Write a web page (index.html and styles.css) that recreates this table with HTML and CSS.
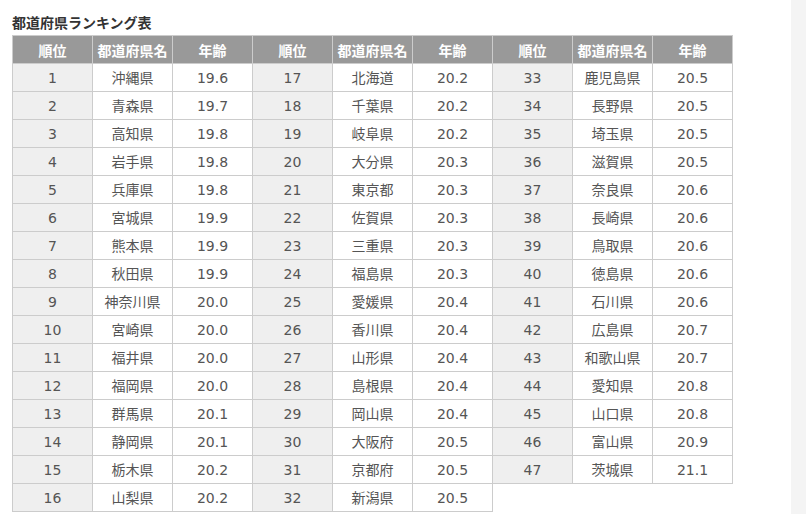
FILE: index.html
```html
<!DOCTYPE html>
<html lang="ja">
<head>
<meta charset="utf-8">
<title>都道府県ランキング表</title>
<link rel="stylesheet" href="styles.css">
</head>
<body>
<div class="page">
  <main class="main">
    <h2 class="title">都道府県ランキング表</h2>
    <div class="tables">
      <table class="rank">
        <colgroup><col class="c"><col class="c"><col class="c"></colgroup>
        <thead><tr><th>順位</th><th>都道府県名</th><th>年齢</th></tr></thead>
        <tbody>
          <tr><td class="no">1</td><td>沖縄県</td><td>19.6</td></tr>
          <tr><td class="no">2</td><td>青森県</td><td>19.7</td></tr>
          <tr><td class="no">3</td><td>高知県</td><td>19.8</td></tr>
          <tr><td class="no">4</td><td>岩手県</td><td>19.8</td></tr>
          <tr><td class="no">5</td><td>兵庫県</td><td>19.8</td></tr>
          <tr><td class="no">6</td><td>宮城県</td><td>19.9</td></tr>
          <tr><td class="no">7</td><td>熊本県</td><td>19.9</td></tr>
          <tr><td class="no">8</td><td>秋田県</td><td>19.9</td></tr>
          <tr><td class="no">9</td><td>神奈川県</td><td>20.0</td></tr>
          <tr><td class="no">10</td><td>宮崎県</td><td>20.0</td></tr>
          <tr><td class="no">11</td><td>福井県</td><td>20.0</td></tr>
          <tr><td class="no">12</td><td>福岡県</td><td>20.0</td></tr>
          <tr><td class="no">13</td><td>群馬県</td><td>20.1</td></tr>
          <tr><td class="no">14</td><td>静岡県</td><td>20.1</td></tr>
          <tr><td class="no">15</td><td>栃木県</td><td>20.2</td></tr>
          <tr><td class="no">16</td><td>山梨県</td><td>20.2</td></tr>
        </tbody>
      </table>
      <table class="rank">
        <colgroup><col class="c"><col class="c"><col class="c"></colgroup>
        <thead><tr><th>順位</th><th>都道府県名</th><th>年齢</th></tr></thead>
        <tbody>
          <tr><td class="no">17</td><td>北海道</td><td>20.2</td></tr>
          <tr><td class="no">18</td><td>千葉県</td><td>20.2</td></tr>
          <tr><td class="no">19</td><td>岐阜県</td><td>20.2</td></tr>
          <tr><td class="no">20</td><td>大分県</td><td>20.3</td></tr>
          <tr><td class="no">21</td><td>東京都</td><td>20.3</td></tr>
          <tr><td class="no">22</td><td>佐賀県</td><td>20.3</td></tr>
          <tr><td class="no">23</td><td>三重県</td><td>20.3</td></tr>
          <tr><td class="no">24</td><td>福島県</td><td>20.3</td></tr>
          <tr><td class="no">25</td><td>愛媛県</td><td>20.4</td></tr>
          <tr><td class="no">26</td><td>香川県</td><td>20.4</td></tr>
          <tr><td class="no">27</td><td>山形県</td><td>20.4</td></tr>
          <tr><td class="no">28</td><td>島根県</td><td>20.4</td></tr>
          <tr><td class="no">29</td><td>岡山県</td><td>20.4</td></tr>
          <tr><td class="no">30</td><td>大阪府</td><td>20.5</td></tr>
          <tr><td class="no">31</td><td>京都府</td><td>20.5</td></tr>
          <tr><td class="no">32</td><td>新潟県</td><td>20.5</td></tr>
        </tbody>
      </table>
      <table class="rank">
        <colgroup><col class="c"><col class="c"><col class="c"></colgroup>
        <thead><tr><th>順位</th><th>都道府県名</th><th>年齢</th></tr></thead>
        <tbody>
          <tr><td class="no">33</td><td>鹿児島県</td><td>20.5</td></tr>
          <tr><td class="no">34</td><td>長野県</td><td>20.5</td></tr>
          <tr><td class="no">35</td><td>埼玉県</td><td>20.5</td></tr>
          <tr><td class="no">36</td><td>滋賀県</td><td>20.5</td></tr>
          <tr><td class="no">37</td><td>奈良県</td><td>20.6</td></tr>
          <tr><td class="no">38</td><td>長崎県</td><td>20.6</td></tr>
          <tr><td class="no">39</td><td>鳥取県</td><td>20.6</td></tr>
          <tr><td class="no">40</td><td>徳島県</td><td>20.6</td></tr>
          <tr><td class="no">41</td><td>石川県</td><td>20.6</td></tr>
          <tr><td class="no">42</td><td>広島県</td><td>20.7</td></tr>
          <tr><td class="no">43</td><td>和歌山県</td><td>20.7</td></tr>
          <tr><td class="no">44</td><td>愛知県</td><td>20.8</td></tr>
          <tr><td class="no">45</td><td>山口県</td><td>20.8</td></tr>
          <tr><td class="no">46</td><td>富山県</td><td>20.9</td></tr>
          <tr><td class="no">47</td><td>茨城県</td><td>21.1</td></tr>
        </tbody>
      </table>
    </div>
  </main>
  <aside class="side"></aside>
</div>
</body>
</html>
```

FILE: styles.css
```css
html, body {
  margin: 0;
  padding: 0;
  background: #fff;
  height: 100%;
}
body {
  font-family: "DejaVu Sans", "Noto Sans CJK JP", sans-serif;
  color: #555;
  font-size: 14px;
}
.page {
  display: flex;
  height: 514px;
  overflow: hidden;
}
.main {
  flex: 1;
  padding: 12px 0 0 12px;
}
.side {
  width: 15px;
  background: #f4f4f4;
}
.title {
  margin: 0 0 3px 0;
  font-family: "Noto Sans CJK JP", sans-serif;
  font-size: 14px;
  font-weight: bold;
  line-height: 20px;
  color: #333;
}
.tables {
  display: flex;
  align-items: flex-start;
}
.rank {
  border-collapse: collapse;
  table-layout: fixed;
  width: 241px;
}
.rank + .rank {
  margin-left: -1px;
}
.c {
  width: 80px;
}
.rank th,
.rank td {
  border: 1px solid #cccccc;
  height: 27px;
  padding: 0;
  text-align: center;
  vertical-align: middle;
  line-height: 20px;
  white-space: nowrap;
}
.rank th {
  background: #999999;
  color: #fff;
  font-family: "Noto Sans CJK JP", sans-serif;
  font-weight: bold;
}
.rank td {
  background: #fff;
}
.rank td.no {
  background: #efefef;
}
```
